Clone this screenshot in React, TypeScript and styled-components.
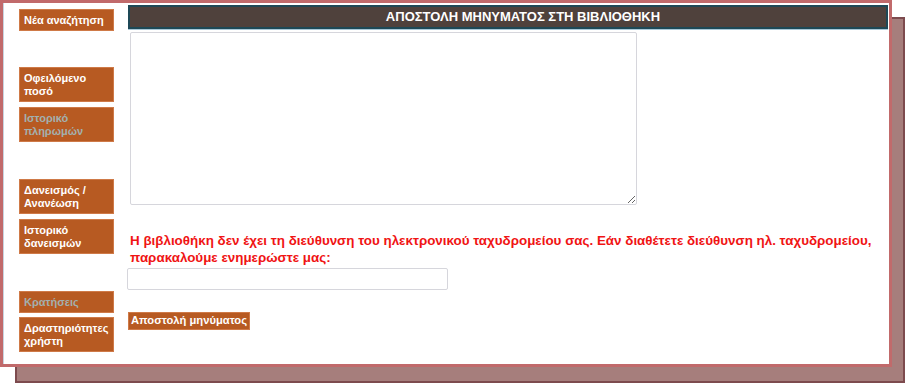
import React from "react";
import styled, { createGlobalStyle } from "styled-components";

const GlobalStyle = createGlobalStyle`
  body {
    margin: 0;
    background: #ffffff;
    font-family: "Liberation Sans", Arial, sans-serif;
  }
`;

const Page = styled.div`
  position: relative;
  width: 907px;
  height: 386px;
`;

// the offset mauve block peeking out under the card
const Backdrop = styled.div`
  position: absolute;
  left: 15px;
  top: 17px;
  width: 890px;
  height: 366px;
  box-sizing: border-box;
  background: #a67e7c;
  border: 2px solid #7d4b4e;
`;

const Card = styled.div`
  position: relative;
  box-sizing: border-box;
  width: 892px;
  height: 367px;
  background: #ffffff;
  border: 3px solid #c16a6b;
  box-shadow: inset 1px 0 0 #c8d4e0;
  display: flex;
  gap: 14px;
  padding: 6px 1px 0 16px;
`;

const Sidebar = styled.nav`
  width: 95px;
  flex: none;
  display: flex;
  flex-direction: column;
`;

const NavButton = styled.div<{ $disabled?: boolean; $gapTop?: number }>`
  box-sizing: border-box;
  width: 95px;
  margin-top: ${(p) => p.$gapTop ?? 0}px;
  padding: 4px 3px 3px 4px;
  background: #b75a22;
  border: 1px solid #cf7a48;
  color: ${(p) => (p.$disabled ? "#a3b0ae" : "#ffffff")};
  font-size: 11px;
  font-weight: bold;
  line-height: 13px;
  cursor: pointer;
`;

const Content = styled.main`
  flex: 1;
  display: flex;
  flex-direction: column;
  align-items: flex-start;
`;

const Header = styled.div`
  box-sizing: border-box;
  width: 100%;
  height: 24px;
  margin-top: -4px;
  padding-left: 30px;
  background: #4f413c;
  border: 2px solid #1e4856;
  box-shadow: 0 1px 0 #a9c8d8;
  color: #ffffff;
  font-size: 13px;
  font-weight: bold;
  line-height: 19px;
  text-align: center;
`;

const MessageBox = styled.textarea`
  box-sizing: border-box;
  width: 507px;
  height: 173px;
  margin: 3px 0 0 2px;
  border: 1px solid #d6d6dc;
  border-radius: 2px;
  resize: both;
  font-family: "Liberation Sans", Arial, sans-serif;
`;

const Notice = styled.p`
  margin: 27px 0 0 2px;
  color: #f01414;
  font-size: 13.4px;
  font-weight: bold;
  line-height: 17px;
`;

const EmailInput = styled.input`
  box-sizing: border-box;
  width: 321px;
  height: 22px;
  margin: 2px 0 0 -1px;
  border: 1px solid #d6d6dc;
  border-radius: 2px;
`;

const SendButton = styled.button`
  margin: 22px 0 0 0;
  padding: 1px 2px 2px;
  background: #b75a22;
  border: 1px solid #cf7a48;
  color: #ffffff;
  font-family: "Liberation Sans", Arial, sans-serif;
  font-size: 11.2px;
  font-weight: bold;
  line-height: 13px;
  cursor: pointer;
`;

const navGroups = [
  [{ label: "Νέα αναζήτηση" }],
  [{ label: "Οφειλόμενο ποσό" }, { label: "Ιστορικό πληρωμών", disabled: true }],
  [{ label: "Δανεισμός / Ανανέωση" }, { label: "Ιστορικό δανεισμών" }],
  [{ label: "Κρατήσεις", disabled: true }, { label: "Δραστηριότητες χρήστη" }],
];

export default function App() {
  return (
    <>
      <GlobalStyle />
      <Page>
        <Backdrop />
        <Card>
          <Sidebar>
            {navGroups.map((group, gi) =>
              group.map((item, ii) => (
                <NavButton
                  key={item.label}
                  $disabled={item.disabled}
                  $gapTop={ii === 0 ? (gi === 0 ? 0 : gi === 1 ? 36 : 37) : gi === 3 ? 4 : 5}
                >
                  {item.label}
                </NavButton>
              ))
            )}
          </Sidebar>
          <Content>
            <Header>ΑΠΟΣΤΟΛΗ ΜΗΝΥΜΑΤΟΣ ΣΤΗ ΒΙΒΛΙΟΘΗΚΗ</Header>
            <MessageBox />
            <Notice>
              Η βιβλιοθήκη δεν έχει τη διεύθυνση του ηλεκτρονικού ταχυδρομείου σας. Εάν διαθέτετε
              διεύθυνση ηλ. ταχυδρομείου, παρακαλούμε ενημερώστε μας:
            </Notice>
            <EmailInput type="text" />
            <SendButton>Αποστολή μηνύματος</SendButton>
          </Content>
        </Card>
      </Page>
    </>
  );
}
